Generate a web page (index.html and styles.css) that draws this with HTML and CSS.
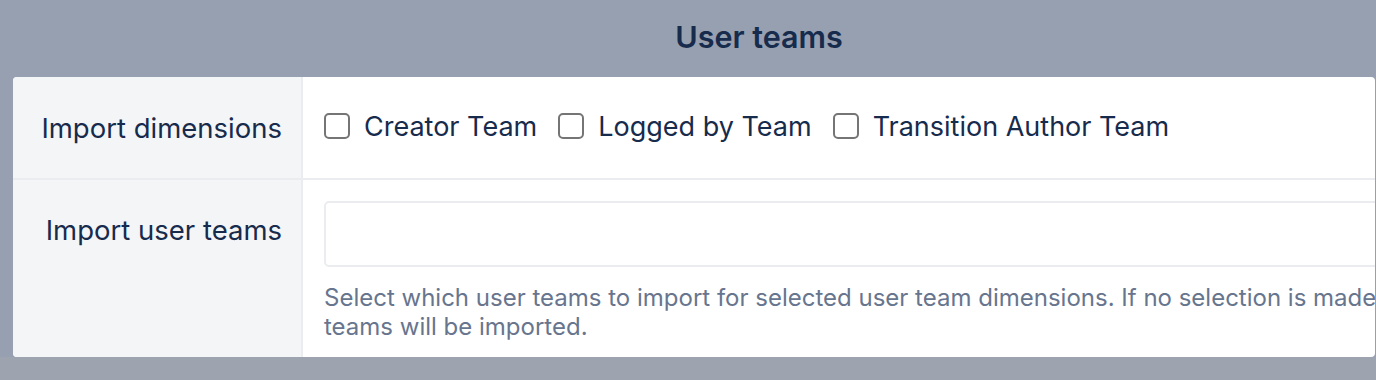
FILE: index.html
```html
<!DOCTYPE html>
<html lang="en">
<head>
<meta charset="utf-8">
<title>User teams</title>
<link rel="stylesheet" href="styles.css">
</head>
<body>
<div class="backdrop">
  <div class="modal">
    <header class="modal-header">
      <h1 class="modal-title">User teams</h1>
    </header>
    <div class="card">
      <div class="row row-center">
        <div class="label-cell">Import dimensions</div>
        <div class="field-cell">
          <div class="checks">
            <label class="check"><span class="box"></span><span class="check-text">Creator Team</span></label>
            <label class="check"><span class="box"></span><span class="check-text">Logged by Team</span></label>
            <label class="check"><span class="box"></span><span class="check-text">Transition Author Team</span></label>
          </div>
        </div>
      </div>
      <div class="row">
        <div class="label-cell label-top">Import user teams</div>
        <div class="field-cell field-stack">
          <div class="input"></div>
          <p class="help">Select which user teams to import for selected user team dimensions. If no selection is made, all user teams will be imported.</p>
        </div>
      </div>
    </div>
  </div>
</div>
</body>
</html>
```

FILE: styles.css
```css
html, body {
  margin: 0;
  padding: 0;
  height: 100%;
  overflow: hidden;
}
body {
  background: #9da4b0;
  font-family: Inter, "Noto Sans", "Liberation Sans", sans-serif;
  color: #172b4d;
}
.backdrop {
  background: #97a0b0;
  height: 357px;
  padding-left: 13px;
  box-sizing: border-box;
}
.modal {
  width: 1492px;
}
.modal-header {
  height: 77px;
  display: flex;
  align-items: center;
  justify-content: center;
}
.modal-title {
  margin: 0;
  font-size: 30.5px;
  font-weight: 600;
  color: #172b4d;
  padding-bottom: 4px;
}
.card {
  width: 1362px;
  height: 280px;
  background: #fff;
  border-radius: 4px;
  overflow: hidden;
  display: flex;
  flex-direction: column;
}
.row {
  display: flex;
  width: 1492px;
}
.row-center {
  height: 101px;
  border-bottom: 2px solid #ebecf0;
}
.row-center .label-cell {
  display: flex;
  align-items: center;
  justify-content: flex-end;
}
.row:last-child {
  flex: 1;
}
.label-cell {
  width: 290px;
  flex: none;
  box-sizing: border-box;
  background: #f4f5f7;
  border-right: 2px solid #ebecf0;
  padding-right: 19px;
  text-align: right;
  font-size: 27.5px;
}
.label-top {
  padding-top: 34px;
  line-height: 32px;
}
.field-cell {
  flex: 1;
  padding-left: 21px;
  display: flex;
  align-items: center;
}
.checks {
  display: flex;
  align-items: center;
  gap: 21px;
}
.check {
  display: flex;
  align-items: center;
  gap: 14px;
  font-size: 27px;
  padding-bottom: 3px;
}
.box {
  width: 26px;
  height: 26px;
  box-sizing: border-box;
  border: 2px solid #757575;
  border-radius: 5px;
  background: #fff;
  flex: none;
}
.field-stack {
  flex-direction: column;
  align-items: stretch;
  padding-top: 21px;
  padding-right: 21px;
}
.input {
  height: 66px;
  box-sizing: border-box;
  border: 2px solid #ebecf0;
  border-radius: 5px;
  background: #fff;
}
.help {
  margin: 16px 0 0;
  width: 1200px;
  font-size: 24px;
  letter-spacing: 0;
  line-height: 29px;
  color: #67758e;
}
```
